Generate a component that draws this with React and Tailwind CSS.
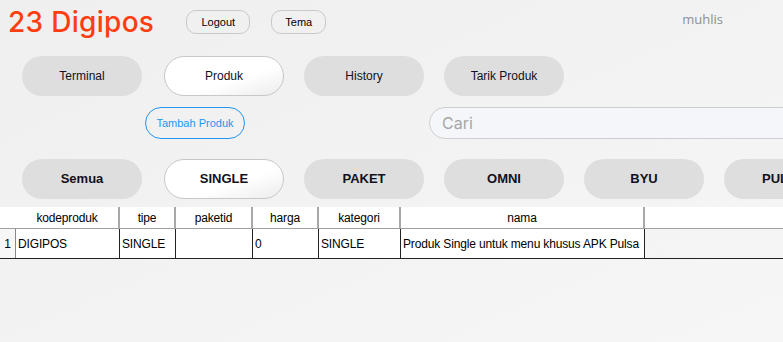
import React, { useState } from 'react';

const navItems = ['Terminal', 'Produk', 'History', 'Tarik Produk'];
const categories = ['Semua', 'SINGLE', 'PAKET', 'OMNI', 'BYU', 'PULSA'];

const columns = [
  { key: 'kodeproduk', width: 'w-[104px]' },
  { key: 'tipe', width: 'w-[56px]' },
  { key: 'paketid', width: 'w-[77px]' },
  { key: 'harga', width: 'w-[66px]' },
  { key: 'kategori', width: 'w-[82px]' },
  { key: 'nama', width: 'w-[244px]' }
];

const rows = [
  {
    kodeproduk: 'DIGIPOS',
    tipe: 'SINGLE',
    paketid: '',
    harga: '0',
    kategori: 'SINGLE',
    nama: 'Produk Single untuk menu khusus APK Pulsa'
  }
];

function Pill({ label, active, bold, onClick }) {
  return (
    <button
      onClick={onClick}
      className={`shrink-0 h-10 w-[120px] rounded-[20px] flex items-center justify-center whitespace-nowrap text-[#111122] ${
        bold ? 'text-[13px] font-bold' : 'text-[12px]'
      } ${
        active
          ? 'ml-0.5 bg-gradient-to-br from-white from-60% to-[#ececec] border border-[#c8c8c8]'
          : 'bg-[#dedede]'
      }`}
    >
      {label}
    </button>
  );
}

export default function App() {
  const [page, setPage] = useState('Produk');
  const [category, setCategory] = useState('SINGLE');
  const [search, setSearch] = useState('');

  return (
    <div className="w-[783px] h-[342px] overflow-hidden bg-gradient-to-br from-[#efefef] to-[#f6f6f6] font-['Liberation_Sans',sans-serif]">
      {/* Header */}
      <div className="flex items-center h-[44px]">
        <h1 className="ml-2 text-[28px] leading-none font-medium text-[#ff3d0f] font-['Inter',sans-serif] tracking-[0.3px]">
          23 Digipos
        </h1>
        <button className="ml-[32px] h-6 w-16 shrink-0 rounded-[10px] border border-[#c9c9c9] text-[11px] text-black">
          Logout
        </button>
        <button className="ml-[21px] h-6 w-[55px] shrink-0 rounded-[10px] border border-[#c9c9c9] text-[11px] text-black">
          Tema
        </button>
        <span className="ml-auto mr-[60px] mb-1 text-[13px] text-[#8f8f8f] font-['Open_Sans',sans-serif]">
          muhlis
        </span>
      </div>

      {/* Navigation */}
      <div className="flex gap-5 pl-[22px] mt-3">
        {navItems.map((item) => (
          <Pill key={item} label={item} active={page === item} onClick={() => setPage(item)} />
        ))}
      </div>

      {/* Actions */}
      <div className="flex items-center mt-[11px] h-8">
        <button className="ml-[145px] h-8 w-[100px] shrink-0 whitespace-nowrap rounded-2xl border border-[#2196f3] text-[11px] text-[#2196f3]">
          Tambah Produk
        </button>
        <input
          value={search}
          onChange={(e) => setSearch(e.target.value)}
          placeholder="Cari"
          className="ml-[184px] h-8 w-[400px] shrink-0 rounded-l-2xl border border-[#cfcfcf] bg-[#f5f6fa] pl-3 text-[16px] font-['Inter',sans-serif] placeholder:text-[#a6a6a6] outline-none"
        />
      </div>

      {/* Categories */}
      <div className="flex gap-5 pl-[22px] mt-5">
        {categories.map((item) => (
          <Pill key={item} label={item} bold active={category === item} onClick={() => setCategory(item)} />
        ))}
      </div>

      {/* Table */}
      <div className="mt-2 text-[12px] text-black tracking-[-0.15px]">
        <div className="flex h-[22px] bg-white border-b border-[#a0a0a0]">
          <div className="w-4 shrink-0" />
          {columns.map((col) => (
            <div
              key={col.key}
              className={`${col.width} shrink-0 flex items-center justify-center border-r-2 border-[#a8a8a8]`}
            >
              {col.key}
            </div>
          ))}
          <div className="flex-1" />
        </div>
        {rows.map((row, i) => (
          <div key={i} className="flex h-[30px] border-b-[1.5px] border-[#222]">
            <div className="w-4 shrink-0 flex items-center justify-center bg-[#f7f7f7] border-r border-[#888]">
              {i + 1}
            </div>
            {columns.map((col) => (
              <div
                key={col.key}
                className={`${col.width} shrink-0 flex items-center pl-[2px] bg-white border-r border-[#222] whitespace-nowrap overflow-hidden`}
              >
                {row[col.key]}
              </div>
            ))}
            <div className="flex-1" />
          </div>
        ))}
      </div>
    </div>
  );
}
